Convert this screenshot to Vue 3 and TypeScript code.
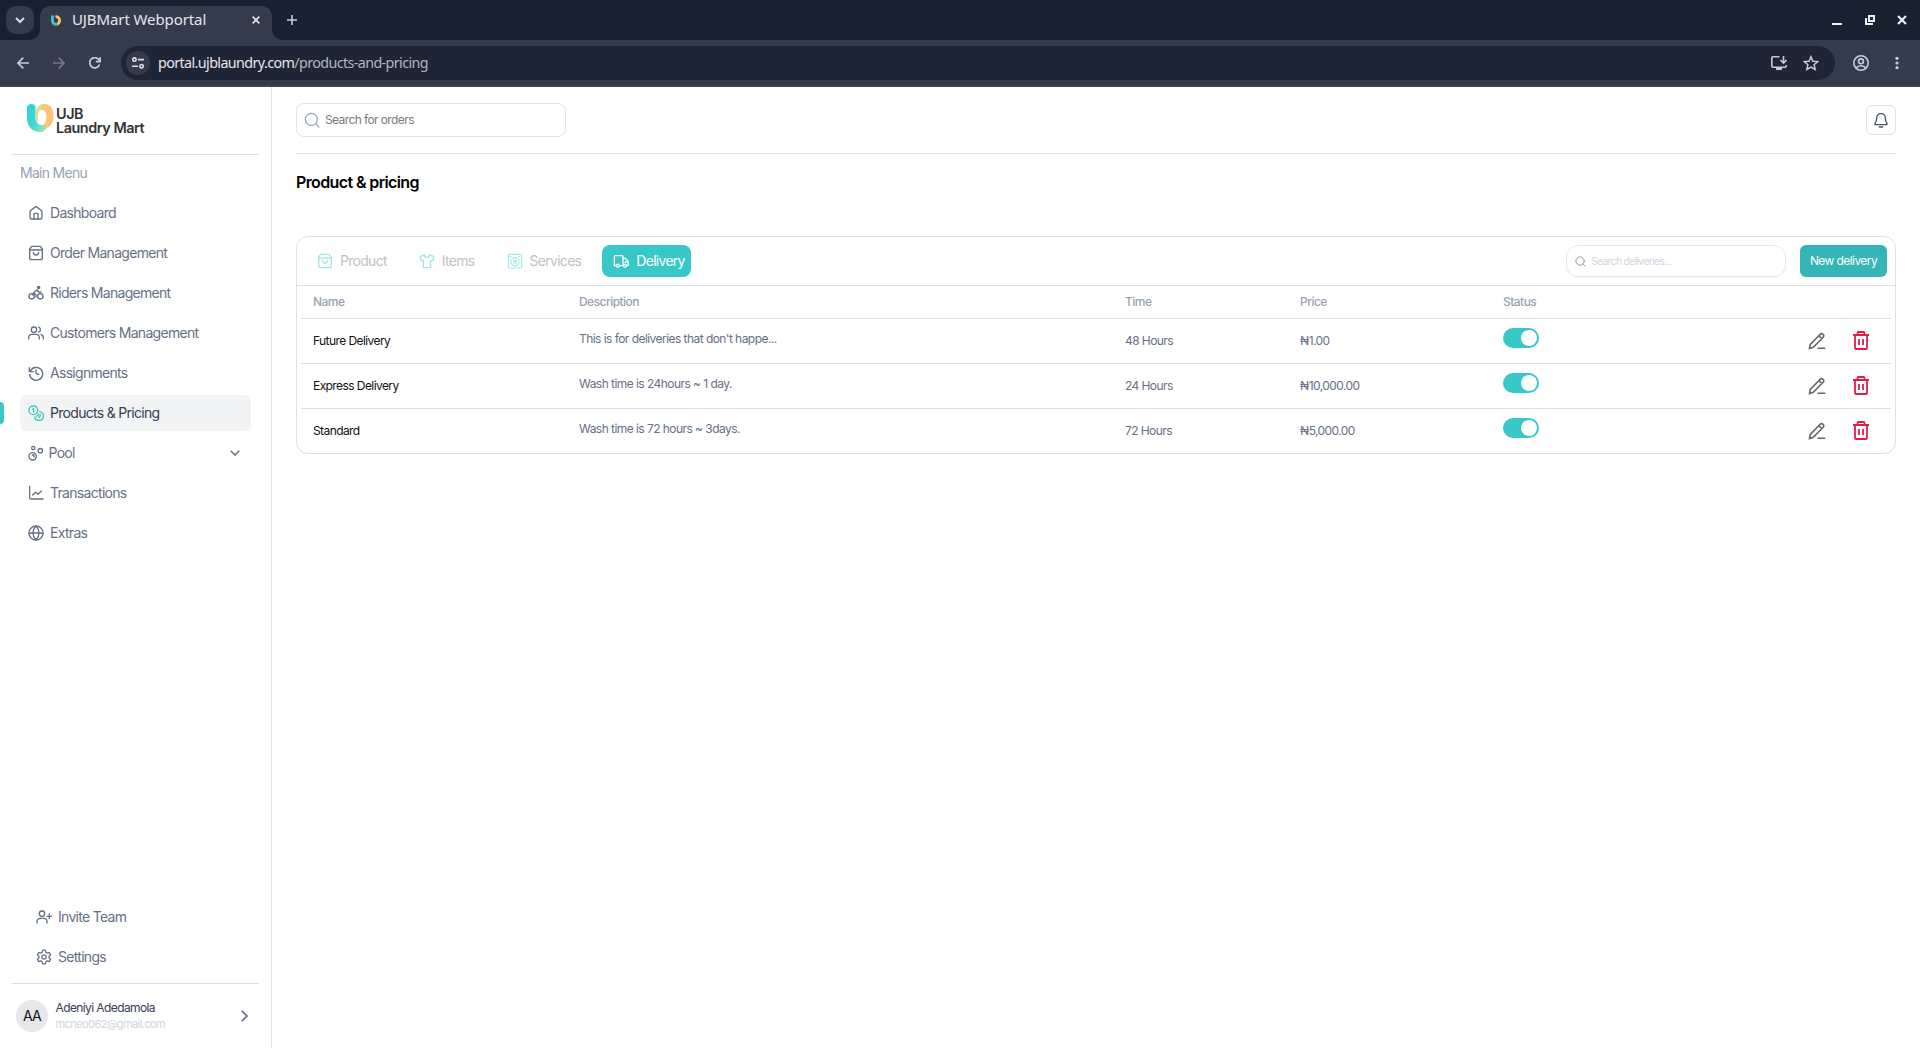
<script setup lang="ts">
interface NavItem { label: string; icon: string; active?: boolean; expandable?: boolean }
interface Delivery { name: string; description: string; time: string; price: string }

const icons: Record<string, string> = {
  home: '<path d="M9 21v-7.4c0-.6.4-1 1-1h4c.6 0 1 .4 1 1V21"/><path d="M11 2.8 4 8.2c-.6.5-1 1.200-1 2V18c0 2 1 3 3 3h12c2 0 3-1 3-3v-7.800c0-.8-.4-1.500-1-2l-7-5.400c-.6-.5-1.400-.5-2 0z"/>',
  bag: '<path d="M2.800 7.500h18.400"/><path d="M5.600 2h12.800L21.500 6v13c0 2-1 3-3 3h-13c-2 0-3-1-3-3V6z"/><path d="M8 11a4 4 0 0 0 8 0"/>',
  bike: '<circle cx="5.500" cy="17" r="4"/><circle cx="18.500" cy="17" r="4"/><path d="M12 18v-3.500l-3.500-3 5-4.500 2.500 3.500h3.500M8.500 12l-2 3"/><circle cx="16" cy="3.800" r="1.600" fill="currentColor"/>',
  users: '<circle cx="9" cy="7" r="4"/><path d="M1 21v-2a5 5 0 0 1 5-5h6a5 5 0 0 1 5 5v2M16 3.300a4 4 0 0 1 0 7.500M23 21v-2c0-2.300-1.400-4.100-3.500-4.700"/>',
  history: '<path d="M2 4v6h6M3.300 9.500A9.700 9.700 0 1 1 2.600 14M12 7v5.500l4 2"/>',
  coins: '<circle cx="8" cy="8" r="6.500"/><path d="M7 6h1.500v4.500M17.800 9.800A6.800 6.800 0 1 1 9.800 17.800M13 17l3-3M18.500 14.500c0 2-1 3-2 4"/>',
  pool: '<circle cx="8" cy="4.500" r="2.500"/><circle cx="18.500" cy="8.500" r="3.300"/><circle cx="7" cy="17" r="5.500"/><path d="M6.500 15H9v3"/>',
  chart: '<path d="M2.500 2v17c0 1.500.5 2 2 2h18M7 15l4-4 4 3 5-5"/>',
  globe: '<circle cx="12" cy="12" r="10.500"/><path d="M1.500 12h21M12 1.500c6 6 6 15 0 21M12 1.500c-6 6-6 15 0 21"/>',
  invite: '<circle cx="9" cy="7" r="4"/><path d="M1.500 21v-2a5 5 0 0 1 5-5h5a5 5 0 0 1 5 5v2M20 7.500v7M16.500 11h7"/>',
  settings: '<circle cx="12" cy="12" r="3.200"/><path d="M10 1.800h4l.7 3 2.200 1.300 3-.9 2 3.500-2.300 2.100v2.400l2.300 2.100-2 3.500-3-.9-2.200 1.300-.7 3h-4l-.7-3-2.200-1.300-3 .9-2-3.500 2.300-2.100v-2.400L2.100 8.700l2-3.500 3 .9 2.200-1.300z"/>',
  shirt: '<path d="M8 2.500 2 5.500l1 6 3.500-.5V21c0 .6.4 1 1 1h9c.6 0 1-.4 1-1V11l3.500.5 1-6-6-3a4 4 0 0 1-8 0z"/>',
  washer: '<g stroke-width="1.700"><rect x="2" y="2" width="20" height="20.500" rx="1.500"/><circle cx="12" cy="13" r="6"/><path d="M14.300 11.200c-1.300-1.200-4.300-.9-4 .7.300 1.500 3.800.7 3.800 2.300 0 1.500-2.800 1.500-4.300.3M5 5.200h1.500M17.500 5.200H19"/></g>',
  truck: '<path d="M5 19H3.500A1.500 1.500 0 0 1 2 17.500V5.500C2 4.700 2.700 4 3.500 4h10c.8 0 1.500.7 1.500 1.500V19H9.500M15 8h3.500L23 13v4.500c0 .8-.7 1.500-1.500 1.500H20M23 13.500h-5"/><circle cx="7.300" cy="19" r="2.200"/><circle cx="18" cy="19" r="2.200"/>',
  search: '<circle cx="11" cy="11" r="9"/><path d="m17.500 17.500 5 5"/>',
  bell: '<path d="M12 2.500c-4 0-6.500 3-6.500 6.500 0 5-1.200 6.500-2.300 7.800-.8 1-.2 2.200 1 2.200h15.600c1.200 0 1.800-1.200 1-2.200-1.100-1.300-2.300-2.800-2.300-7.800 0-3.500-2.500-6.500-6.500-6.500zM9.500 22.500h5"/>',
}

const mainMenu: NavItem[] = [
  { label: 'Dashboard', icon: 'home' },
  { label: 'Order Management', icon: 'bag' },
  { label: 'Riders Management', icon: 'bike' },
  { label: 'Customers Management', icon: 'users' },
  { label: 'Assignments', icon: 'history' },
  { label: 'Products & Pricing', icon: 'coins', active: true },
  { label: 'Pool', icon: 'pool', expandable: true },
  { label: 'Transactions', icon: 'chart' },
  { label: 'Extras', icon: 'globe' },
]
const footerMenu: NavItem[] = [
  { label: 'Invite Team', icon: 'invite' },
  { label: 'Settings', icon: 'settings' },
]
const tabs: NavItem[] = [
  { label: 'Product', icon: 'bag' },
  { label: 'Items', icon: 'shirt' },
  { label: 'Services', icon: 'washer' },
  { label: 'Delivery', icon: 'truck', active: true },
]
const deliveries: Delivery[] = [
  { name: 'Future Delivery', description: "This is for deliveries that don't happe...", time: '48 Hours', price: '₦1.00' },
  { name: 'Express Delivery', description: 'Wash time is 24hours ~ 1 day.', time: '24 Hours', price: '₦10,000.00' },
  { name: 'Standard', description: 'Wash time is 72 hours ~ 3days.', time: '72 Hours', price: '₦5,000.00' },
]
</script>

<template>
  <div class="window">
    <header class="tabstrip">
      <div class="tab-search">
        <svg width="12" height="12" viewBox="0 0 12 12"><path d="M2 4l4 4 4-4" stroke-width="2" /></svg>
      </div>
      <div class="browser-tab">
        <svg class="favicon" width="10" height="11" viewBox="0 0 10 11">
          <path d="M1.500.5v5a3.700 3.700 0 0 0 4 3.900" stroke="#35c9c4" stroke-width="2.900" />
          <path d="M4.500 2a3.100 3.700 0 1 1 1.200 7.200" stroke="#f9bd68" stroke-width="2.900" />
        </svg>
        <span class="tab-title">UJBMart Webportal</span>
        <svg class="tab-close" width="8" height="8" viewBox="0 0 8 8"><path d="M.7.7l6.600 6.600M7.300.7.700 7.300" stroke-width="1.700" /></svg>
      </div>
      <svg class="new-tab" width="10" height="10" viewBox="0 0 10 10"><path d="M5 0v10M0 5h10" stroke-width="1.600" /></svg>
      <div class="window-controls">
        <svg width="10" height="10" viewBox="0 0 10 10"><path d="M0 9h10" stroke-width="2" /></svg>
        <svg width="10" height="10" viewBox="0 0 10 10"><path d="M4 1h5v5H4zM1 3v6h7" stroke-width="2" /></svg>
        <svg width="10" height="10" viewBox="0 0 10 10"><path d="M1 1l8 8M9 1 1 9" stroke-width="2.200" /></svg>
      </div>
    </header>

    <div class="toolbar">
      <svg class="nav-btn" width="12" height="12" viewBox="0 0 12 12"><path d="M12 6H1M6.300.7 1 6l5.300 5.300" /></svg>
      <svg class="nav-btn dim" width="12" height="12" viewBox="0 0 12 12"><path d="M0 6h11M5.700.7 11 6l-5.300 5.300" /></svg>
      <svg class="nav-btn" width="12" height="12" viewBox="0 0 12 12"><path d="M10.600 7.500A5.100 5.100 0 1 1 10.300 3.300L11.200 4.500M11.200.3v4.400H6.800" /></svg>
      <div class="address">
        <span class="site-info">
          <svg width="12" height="12" viewBox="0 0 12 12"><circle cx="2.400" cy="2.600" r="1.700" /><path d="M6 2.600h6M0 9.200h6" /><circle cx="9.600" cy="9.200" r="1.700" /></svg>
        </span>
        <span class="url">portal.ujblaundry.com<span class="path">/products-and-pricing</span></span>
        <svg class="install" width="16" height="14" viewBox="0 0 16 14"><path d="M8.500.8H2Q.8.800.8 2v8q0 1.200 1.200 1.200h12q1.200 0 1.200-1.200V9M12.500 0v6.500M9.500 4l3 3 3-3" /><path d="M5 12.800h6" stroke-width="2.400" /></svg>
        <svg class="star" width="16" height="16" viewBox="0 0 16 16"><path d="m8 1.700 1.900 4.500 4.900.4-3.700 3.200 1.100 4.700L8 12l-4.200 2.500 1.100-4.700L1.200 6.600l4.900-.4z" stroke-width="1.500" /></svg>
      </div>
      <svg class="profile" width="16" height="16" viewBox="0 0 16 16"><circle cx="8" cy="8" r="7.200" /><circle cx="8" cy="6.300" r="2.400" /><path d="M3 13c2.500-3 7.500-3 10 0" /></svg>
      <svg class="menu-dots" width="4" height="14" viewBox="0 0 4 14"><circle cx="2" cy="2.300" r="1.600" /><circle cx="2" cy="7" r="1.600" /><circle cx="2" cy="11.700" r="1.600" /></svg>
    </div>

    <div class="app">
      <aside class="sidebar">
        <div class="brand">
          <svg width="27" height="28" viewBox="0 0 27 28">
            <defs>
              <linearGradient id="teal" x1="0" y1="0" x2="1" y2="1"><stop offset="0" stop-color="#2fd0d2" /><stop offset=".55" stop-color="#41d8cf" /><stop offset="1" stop-color="#b9e3ad" /></linearGradient>
            </defs>
            <path d="M9.500 9C9.500 3 13 0 17.500 0 24 0 26.500 5 26.500 12c0 7-3.500 12-9.500 13l-1-4c2-1.500 3.500-4 3.500-8 0-4.500-2-7-4.500-7-3 0-4 2-4.500 5z" fill="#fac577" />
            <path d="M0 4C0-1 8-1 8.500 3v11c0 4 2.500 7 6 7l5 1c0 4-3 6-6.500 6C5 28 0 22 0 14z" fill="url(#teal)" />
            <path d="M8.500 8C9 3.500 12 .3 16.500 0 14.500 1.500 14 3.500 14 6c-2 .5-3 2.500-3.200 6 0 3 .2 5 .7 7-2-1.300-3-3-3-6z" fill="#d9dc9f" />
          </svg>
          <div class="brand-name"><span>UJB</span><span>Laundry Mart</span></div>
        </div>
        <p class="menu-title">Main Menu</p>
        <nav class="menu">
          <a v-for="item in mainMenu" :key="item.label" class="menu-item" :class="{ active: item.active, group: item.expandable }">
            <svg class="icon" viewBox="0 0 24 24" v-html="icons[item.icon]"></svg>
            <span>{{ item.label }}</span>
            <svg v-if="item.expandable" class="chevron" width="10" height="6" viewBox="0 0 10 6"><path d="M.7.7 5 5 9.300.7" /></svg>
          </a>
        </nav>
        <nav class="menu lower">
          <a v-for="item in footerMenu" :key="item.label" class="menu-item">
            <svg class="icon" viewBox="0 0 24 24" v-html="icons[item.icon]"></svg>
            <span>{{ item.label }}</span>
          </a>
        </nav>
        <div class="account">
          <span class="avatar">AA</span>
          <div class="who"><span class="who-name">Adeniyi Adedamola</span><span class="who-mail">mcneo062@gmail.com</span></div>
          <svg width="7" height="12" viewBox="0 0 7 12"><path d="M.8.800 6 6 .8 11.200" /></svg>
        </div>
      </aside>

      <main class="content">
        <div class="topbar">
          <div class="search">
            <svg class="icon" viewBox="0 0 24 24" v-html="icons.search"></svg>
            <span>Search for orders</span>
          </div>
          <button class="bell"><svg class="icon" viewBox="0 0 24 24" v-html="icons.bell"></svg></button>
        </div>
        <h1>Product &amp; pricing</h1>

        <section class="card">
          <div class="card-head">
            <div class="tabs">
              <button v-for="tab in tabs" :key="tab.label" class="tab" :class="{ active: tab.active }">
                <svg class="icon" viewBox="0 0 24 24" v-html="icons[tab.icon]"></svg>
                <span>{{ tab.label }}</span>
              </button>
            </div>
            <div class="actions">
              <div class="filter">
                <svg class="icon" viewBox="0 0 24 24" v-html="icons.search"></svg>
                <span>Search deliveries...</span>
              </div>
              <button class="create">New delivery</button>
            </div>
          </div>
          <div class="table">
            <div class="row head">
              <span>Name</span><span>Description</span><span>Time</span><span>Price</span><span>Status</span><span></span>
            </div>
            <div v-for="d in deliveries" :key="d.name" class="row">
              <span class="name">{{ d.name }}</span>
              <span class="desc">{{ d.description }}</span>
              <span>{{ d.time }}</span>
              <span>{{ d.price }}</span>
              <span class="switch"><i></i></span>
              <span class="row-actions">
                <svg class="edit" width="18" height="18" viewBox="0 0 18 18"><path d="M1.500 16.500 2.300 12.500 12.200 2.200a1.900 1.900 0 0 1 2.700 0l.3.300a1.900 1.900 0 0 1 0 2.700L5.300 15.300zM11.300 3.400c.3 1.600 1.500 2.600 3 2.900M9.500 16.200h7.800" /></svg>
                <svg class="trash" width="16" height="19" viewBox="0 0 16 19"><path d="M0 4h16M4.500 4V2q0-1 1-1h5q1 0 1 1v2M2 4v13q0 1 1 1h10q1 0 1-1V4M6 8v6M10 8v6" /></svg>
              </span>
            </div>
          </div>
        </section>
      </main>
    </div>
  </div>
</template>

<style>
body { background: #fff; }
</style>

<style scoped>
* { box-sizing: border-box; }
svg { display: block; flex: none; fill: none; stroke: currentColor; }
button { border: 0; background: none; padding: 0; font: inherit; letter-spacing: inherit; }
.icon { width: 16px; height: 16px; stroke-width: 2; stroke-linecap: round; stroke-linejoin: round; }
.window { width: 1920px; height: 1048px; display: flex; flex-direction: column; overflow: hidden; font-family: Inter, "Liberation Sans", sans-serif; }

.tabstrip { height: 40px; flex: none; background: #182130; display: flex; align-items: center; padding-left: 6px; color: #e4e6eb; font-family: "Noto Sans", sans-serif; }
.tab-search { width: 28px; height: 28px; border-radius: 10px; background: #343c4c; display: flex; align-items: center; justify-content: center; color: #d5dcf3; }
.browser-tab { position: relative; align-self: flex-end; width: 232px; height: 34px; margin-left: 6px; border-radius: 10px 10px 0 0; background: #343c4c; display: flex; align-items: center; padding: 0 12px 6px 11px; }
.browser-tab::before, .browser-tab::after { content: ""; position: absolute; bottom: 0; width: 10px; height: 10px; }
.browser-tab::before { left: -10px; background: radial-gradient(circle at 0 0, #182130 9.500px, #343c4c 10px); }
.browser-tab::after { right: -10px; background: radial-gradient(circle at 100% 0, #182130 9.500px, #343c4c 10px); }
.favicon { margin-right: 11px; }
.tab-title { font-size: 15px; letter-spacing: -0.1px; white-space: nowrap; padding-bottom: 2px; }
.tab-close { margin-left: auto; }
.new-tab { margin-left: 15px; color: #c3cbe0; }
.window-controls { margin-left: auto; margin-right: 13px; display: flex; gap: 22.500px; color: #f0f0f2; }
.toolbar { height: 47px; flex: none; background: #343c4c; border-bottom: 1px solid #434958; display: flex; align-items: center; padding: 0 21px 0 17px; color: #c3cbe0; stroke-width: 1.600; font-family: "Noto Sans", sans-serif; }
.nav-btn { margin-right: 24px; stroke-width: 1.700; }
.nav-btn.dim { color: #727888; }
.address { flex: 1; height: 34px; border-radius: 17px; background: #1e2636; margin-left: -4px; display: flex; align-items: center; padding: 0 16px 0 5px; color: #c9c9cf; }
.site-info { width: 24px; height: 24px; border-radius: 50%; background: #343c4c; display: flex; align-items: center; justify-content: center; color: #dcdfe8; }
.url { margin-left: 8px; padding-bottom: 1px; font-size: 14.300px; color: #e6e7ea; white-space: nowrap; letter-spacing: -0.600px; }
.path { color: #b2b5bc; }
.install { margin-left: auto; margin-right: 16px; }
.profile { margin-left: 18px; }
.menu-dots { margin-left: 26px; fill: currentColor; stroke: none; }

.app { flex: 1; display: flex; min-height: 0; }
.sidebar { width: 272px; flex: none; border-right: 1px solid #dfe0e4; display: flex; flex-direction: column; padding: 0 12px; color: #667085; }
.brand { height: 68px; border-bottom: 1px solid #dcdddf; display: flex; padding: 17px 0 0 15px; }
.brand svg { stroke: none; }
.brand-name { display: flex; flex-direction: column; margin: 3px 0 0 2px; font: 600 14.400px/13.500px Inter, sans-serif; letter-spacing: -0.450px; color: #333; white-space: nowrap; }
.menu-title { margin: 8px 0 12px 8px; font-size: 14px; line-height: 20px; letter-spacing: -0.700px; color: #98a2b3; }
.menu { display: flex; flex-direction: column; gap: 4px; padding: 0 8px; }
.menu-item { position: relative; height: 36px; border-radius: 6px; display: flex; align-items: center; gap: 6px; padding: 0 8px; font-size: 14px; letter-spacing: -0.700px; white-space: nowrap; }
.menu-item span { padding-bottom: 2px; }
.menu-item.group { gap: 4.500px; }
.menu-item.active { background: #f2f3f5; color: #344054; }
.menu-item.active .icon { color: #38c8c8; }
.menu-item.active::before { content: ""; position: absolute; left: -20px; top: 7px; width: 4px; height: 22px; border-radius: 0 4px 4px 0; background: #38c8c8; }
.chevron { margin-left: auto; margin-right: 3px; stroke-width: 1.500; }
.lower { margin-top: auto; padding: 0 16px 8px; }
.account { height: 65px; border-top: 1px solid #dcdddf; display: flex; align-items: center; padding: 0 11px 1px 4px; }
.account svg { margin-left: auto; stroke-width: 1.700; }
.avatar { width: 32px; height: 32px; border-radius: 50%; background: #e5e7eb; color: #111; display: flex; align-items: center; justify-content: center; font-size: 14px; letter-spacing: -0.700px; padding-bottom: 1px; }
.who { display: flex; flex-direction: column; margin-left: 7.500px; line-height: 16px; white-space: nowrap; padding-top: 1px; }
.who-name { font-size: 12px; color: #344054; letter-spacing: -0.600px; }
.who-mail { font-size: 11px; color: #d0d5dd; letter-spacing: -0.580px; }

.content { flex: 1; padding: 0 24px; display: flex; flex-direction: column; }
.topbar { height: 67px; border-bottom: 1px solid #dfe0e4; display: flex; align-items: center; justify-content: space-between; }
.search { width: 270px; height: 34px; border: 1px solid #dfe0e8; border-radius: 8px; display: flex; align-items: center; gap: 5px; padding-left: 7px; font-size: 12px; letter-spacing: -0.600px; color: #7b7b7b; }
.search span { padding-bottom: 2px; }
.search .icon { color: #98a2b3; stroke-width: 1.800; }
.bell { width: 30px; height: 30px; border: 1px solid #dfe0e8; border-radius: 6px; display: flex; align-items: center; justify-content: center; color: #475467; }
h1 { margin: 16px 0 0; font-size: 16px; line-height: 24px; font-weight: 600; letter-spacing: -0.620px; color: #000; }
.card { margin-top: 42px; height: 218px; border: 1px solid #dfe0e4; border-radius: 12px; }
.card-head { height: 49px; border-bottom: 1px solid #dfe0e4; display: flex; justify-content: space-between; align-items: center; padding: 0 8px 0 9px; }
.tabs { display: flex; gap: 21px; }
.tab { height: 32px; border-radius: 8px; display: flex; align-items: center; gap: 7px; padding: 0 0 0 11px; font-size: 14px; letter-spacing: -0.710px; color: #c2c2c2; }
.tab span { padding-bottom: 1px; }
.tab .icon { color: #a5e6e5; }
.tab.active { background: #38c8c8; color: #fff; padding-right: 6px; }
.tab.active .icon { color: #fff; }
.actions { display: flex; gap: 14px; }
.filter { width: 220px; height: 32px; border: 1px solid #e5e7eb; border-radius: 12px; box-shadow: 0 1px 2px rgba(0, 0, 0, .05); display: flex; align-items: center; gap: 5.500px; padding-left: 7.500px; font-size: 10.500px; letter-spacing: -0.740px; color: #d0d5dd; }
.filter .icon { width: 11px; height: 11px; color: #8690a2; }
.create { width: 87px; height: 32px; border-radius: 6px; background: #35b5b5; color: #fff; font-size: 12px; letter-spacing: -0.580px; padding-bottom: 1px; }
.table { padding: 0 4px; }
.row { height: 45px; border-bottom: 1px solid #dfe0e4; display: grid; grid-template-columns: 266px 546px 175px 203px 1fr 100px; align-items: center; padding-left: 12px; font-size: 12px; letter-spacing: -0.580px; color: #667085; white-space: nowrap; }
.row > span { padding-bottom: 1px; }
.row:last-child { height: 44px; border-bottom: 0; }
.row.head { height: 33px; color: #98a2b3; font-weight: 500; letter-spacing: -0.540px; }
.row .name { color: #101010; }
.row .desc { padding-bottom: 5px; letter-spacing: -0.550px; }
.row .switch { width: 36px; height: 20px; margin-bottom: 7px; border-radius: 10px; background: #38c8c8; display: flex; align-items: center; justify-content: flex-end; padding: 0 2px 0 0; }
.switch i { width: 16px; height: 16px; border-radius: 50%; background: #fff; }
.row .row-actions { display: flex; align-items: center; gap: 27px; padding: 0 0 1px 17px; }
.edit { color: #666; stroke-width: 1.600; }
.trash { color: #e11d48; stroke-width: 1.800; }
</style>
